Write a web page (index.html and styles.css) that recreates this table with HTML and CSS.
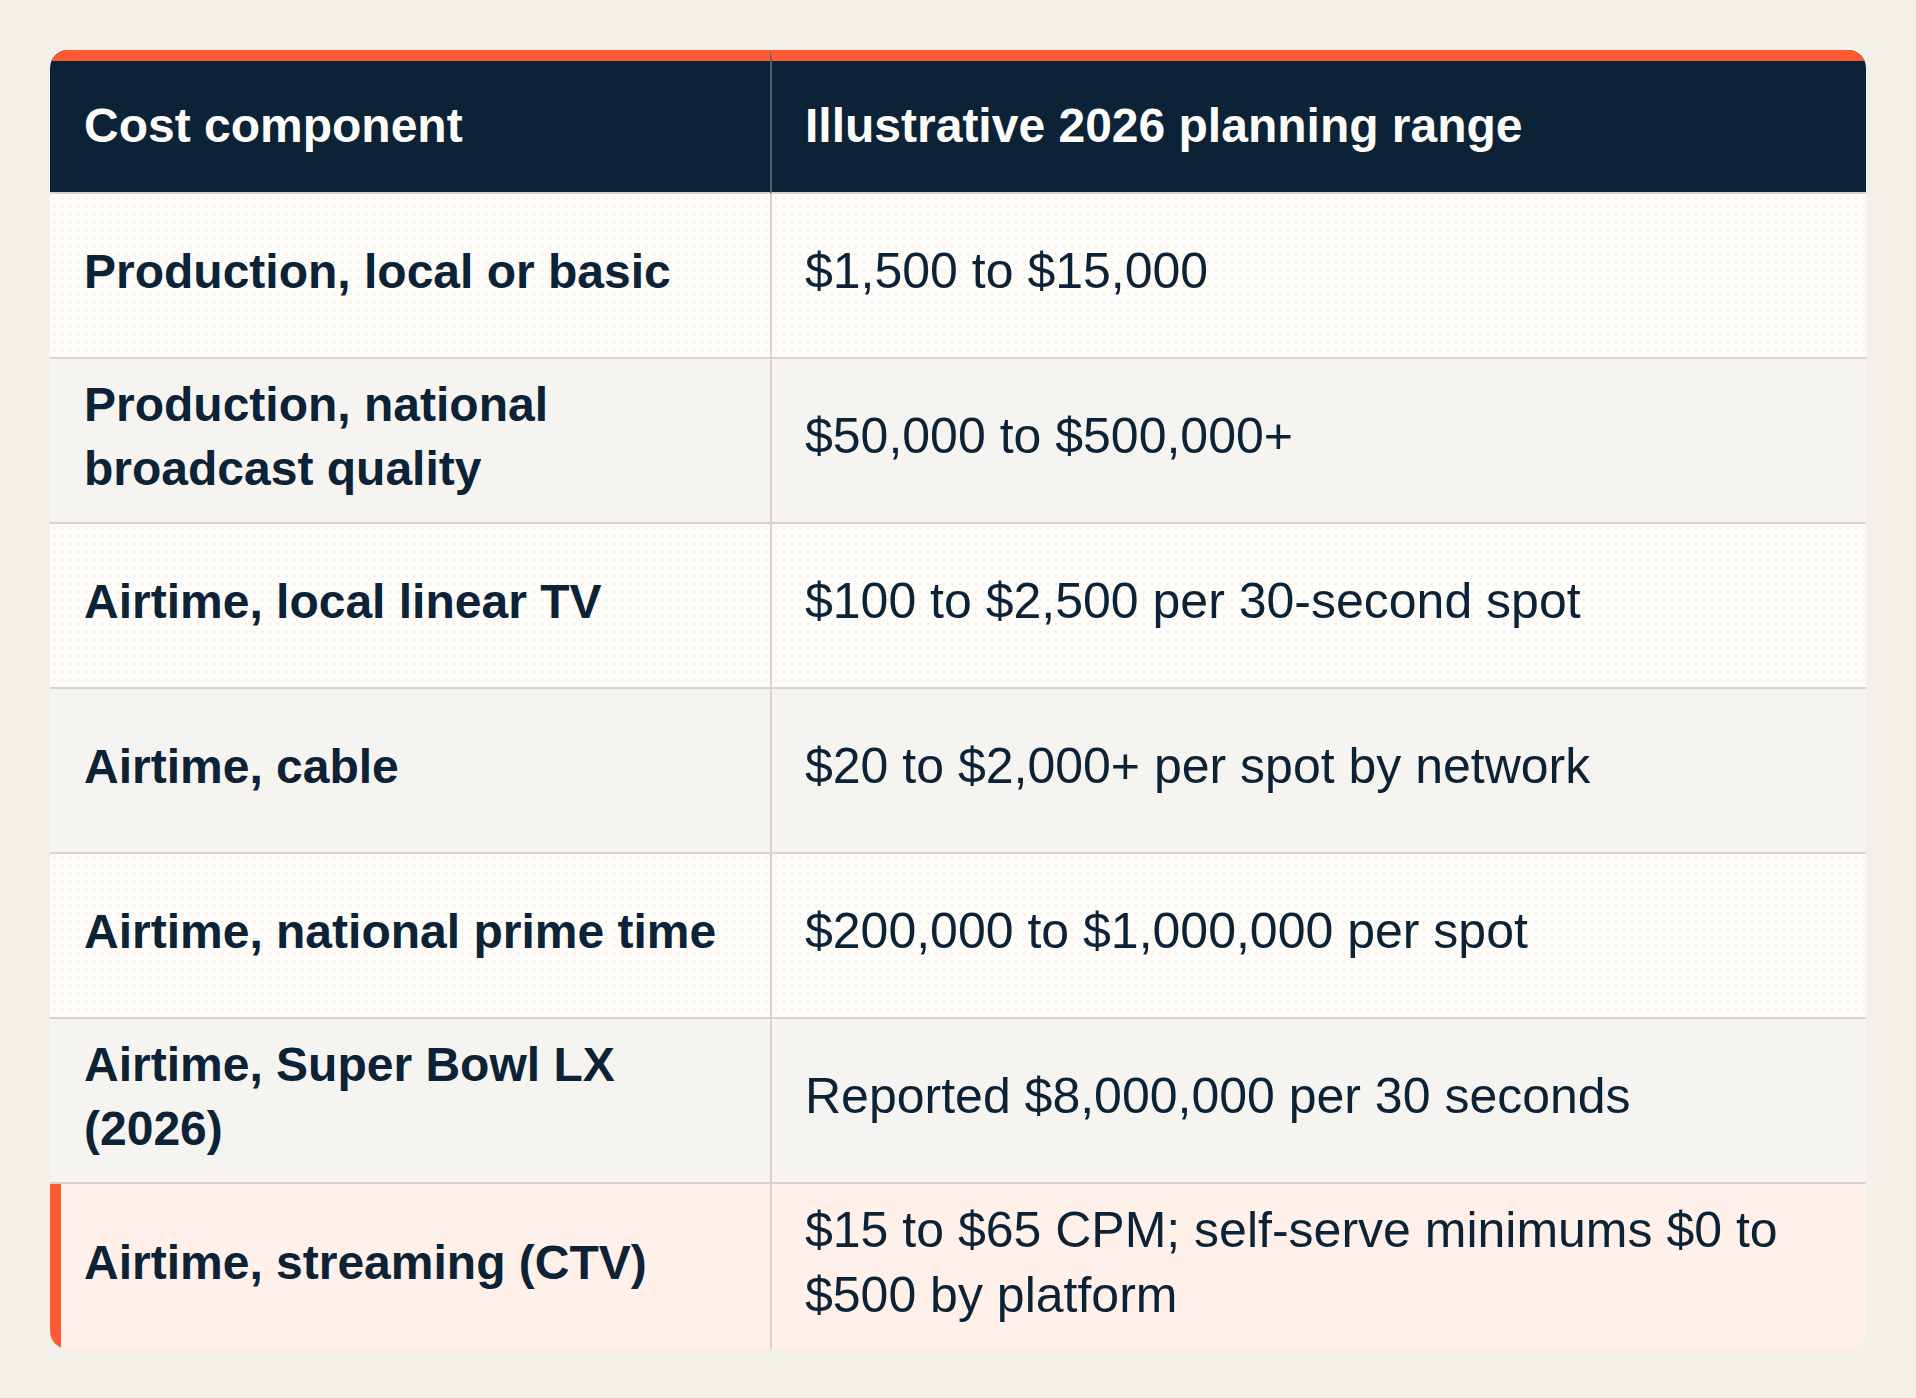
FILE: index.html
```html
<!DOCTYPE html>
<html lang="en">
<head>
<meta charset="utf-8">
<title>TV advertising cost ranges</title>
<link rel="stylesheet" href="styles.css">
</head>
<body>
<div class="card">
  <table class="cost-table">
    <colgroup>
      <col class="col-component">
      <col class="col-range">
    </colgroup>
    <thead>
      <tr>
        <th>Cost component</th>
        <th>Illustrative 2026 planning range</th>
      </tr>
    </thead>
    <tbody>
      <tr class="row-plain">
        <td>Production, local or basic</td>
        <td>$1,500 to $15,000</td>
      </tr>
      <tr class="row-alt">
        <td>Production, national broadcast quality</td>
        <td>$50,000 to $500,000+</td>
      </tr>
      <tr class="row-plain">
        <td>Airtime, local linear TV</td>
        <td>$100 to $2,500 per 30-second spot</td>
      </tr>
      <tr class="row-alt">
        <td>Airtime, cable</td>
        <td>$20 to $2,000+ per spot by network</td>
      </tr>
      <tr class="row-plain">
        <td>Airtime, national prime time</td>
        <td>$200,000 to $1,000,000 per spot</td>
      </tr>
      <tr class="row-alt">
        <td>Airtime, Super Bowl LX (2026)</td>
        <td>Reported $8,000,000 per 30 seconds</td>
      </tr>
      <tr class="row-highlight">
        <td>Airtime, streaming (CTV)</td>
        <td>$15 to $65 CPM; self-serve minimums $0 to $500 by platform</td>
      </tr>
    </tbody>
  </table>
</div>
</body>
</html>
```

FILE: styles.css
```css
html, body {
  margin: 0;
  padding: 0;
  background: #f3f0e9;
}

body {
  padding: 50px;
  font-family: "Liberation Sans", Arial, sans-serif;
  color: #0c2236;
}

.card {
  width: 1816px;
  border-radius: 18px;
  overflow: hidden;
  background: #fdfcf9;
}

.cost-table {
  width: 100%;
  border-collapse: separate;
  border-spacing: 0;
  table-layout: fixed;
}

.col-component {
  width: 720px;
}

.cost-table thead tr {
  height: 144px;
}

.cost-table th {
  box-sizing: border-box;
  height: 144px;
  background: #0c2236;
  color: #fdfcf9;
  font-size: 48px;
  font-weight: 700;
  text-align: left;
  border-top: 11px solid #ff5a33;
  border-bottom: 2px solid #d9d5ce;
  padding: 0 34px 1px 34px;
  line-height: 1.3;
}

.cost-table th + th {
  border-left: 2px solid #55606c;
  padding-left: 33px;
}

.cost-table td {
  height: 165px;
  box-sizing: border-box;
  padding: 0 34px 8px 34px;
  vertical-align: middle;
  border-bottom: 2px solid #d9d5ce;
  font-size: 48px;
  font-weight: 700;
  line-height: 1.32;
}

.cost-table td + td {
  border-left: 2px solid #d9d5ce;
  padding-left: 33px;
  font-size: 50px;
  font-weight: 400;
  line-height: 1.3;
}

.cost-table tbody tr {
  height: 165px;
}

.row-plain td {
  background-color: #fdfcf9;
  background-image: radial-gradient(circle at 4px 4px, #f0ece4 0.9px, transparent 1.3px);
  background-size: 8px 8px;
}

.row-alt td {
  background: #f6f4f0;
}

.row-highlight td {
  background: #fff0e9;
  border-bottom: 0;
}

.row-highlight td:first-child {
  box-shadow: inset 11px 0 0 #ff5a33;
}
```
